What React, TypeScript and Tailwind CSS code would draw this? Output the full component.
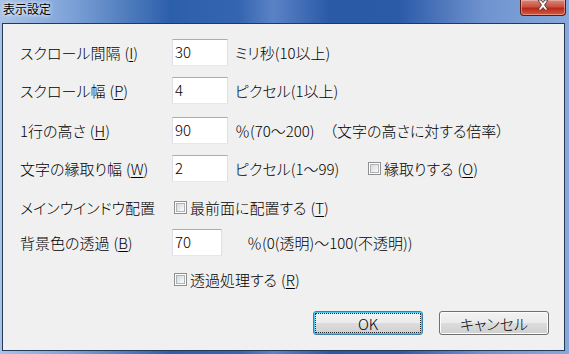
import React from 'react'

const font = "font-['Meiryo_UI','Noto_Sans_CJK_JP',sans-serif] [font-feature-settings:'palt'] font-light"

function TextBox({ value, wide = true }: { value: string; wide?: boolean }) {
  return (
    <div
      className={`${wide ? 'w-[56px]' : 'w-[50px]'} h-[27px] shrink-0 bg-white border border-t-[#abadb3] border-x-[#dbdfe6] border-b-[#e3e9ef] px-[2px] flex items-center text-[15px] leading-none text-black pb-[3px]`}
    >
      {value}
    </div>
  )
}

function CheckBox() {
  return (
    <div className="w-[13px] h-[13px] shrink-0 border border-[#8e8f8f] bg-white p-[1px]">
      <div className="w-full h-full border border-[#aeb3b9] bg-gradient-to-br from-[#d6d9dd] to-[#fbfbfb]" />
    </div>
  )
}

function Label({ children }: { children: React.ReactNode }) {
  return <div className="w-[152px] shrink-0 whitespace-nowrap">{children}</div>
}

function Key({ k }: { k: string }) {
  return (
    <span className="ml-[4px]">
      (<u className="underline-offset-2">{k}</u>)
    </span>
  )
}

export default function App() {
  return (
    <div className={`w-[569px] h-[354px] overflow-hidden flex flex-col bg-[linear-gradient(to_right,#a9c3e6_0%,#7fa3d8_12%,#2c5faa_30%,#3565b0_42%,#5a83c6_48%,#2a59a6_58%,#2b5aa7_70%,#6f93cf_85%,#86a8da_100%)] ${font}`}>
      {/* Title bar */}
      <div className="h-[23px] shrink-0 flex items-start justify-between pl-[3px]">
        <div className="mt-[2px] text-[12px] leading-[14px] font-normal text-black [text-shadow:0_0_6px_#ffffff,0_0_3px_#ffffff]">
          表示設定
        </div>
        <div className="mr-[3px] w-[46px] h-[16px] rounded-b-[4px] border border-t-0 border-[#5b1a14] bg-[linear-gradient(to_bottom,#d58a7d_0%,#c9503f_45%,#b8281a_55%,#d25d43_100%)] flex items-start justify-center shadow-[inset_0_0_0_1px_rgba(255,200,190,0.5)]">
          <svg width="12" height="10" viewBox="0 0 12 10">
            <path d="M1 0 L4 0 L6 2.5 L8 0 L11 0 L7.5 5 L11 10 L8 10 L6 7.5 L4 10 L1 10 L4.5 5 Z" fill="#ffffff" stroke="#3a2a2a" strokeWidth="0.8" />
          </svg>
        </div>
      </div>

      {/* Client area */}
      <div className="ml-[2px] mr-[4px] mb-[3px] flex-1 border border-[#263a57] bg-[#f0f0f0] text-[15px] leading-none text-black flex flex-col pl-[17px] pr-[15px]">
        <div className="mt-[15px] h-[27px] flex items-center">
          <Label>スクロール間隔<Key k="I" /></Label>
          <TextBox value="30" />
          <div className="ml-[7px] whitespace-nowrap">ミリ秒(10以上)</div>
        </div>

        <div className="mt-[11px] h-[27px] flex items-center">
          <Label>スクロール幅<Key k="P" /></Label>
          <TextBox value="4" />
          <div className="ml-[7px] whitespace-nowrap">ピクセル(1以上)</div>
        </div>

        <div className="mt-[13px] h-[27px] flex items-center">
          <Label>1行の高さ<Key k="H" /></Label>
          <TextBox value="90" />
          <div className="ml-[7px] whitespace-nowrap">％(70～200)　（文字の高さに対する倍率）</div>
        </div>

        <div className="mt-[11px] h-[27px] flex items-center">
          <Label>文字の縁取り幅<Key k="W" /></Label>
          <TextBox value="2" />
          <div className="ml-[7px] w-[133px] shrink-0 whitespace-nowrap">ピクセル(1～99)</div>
          <CheckBox />
          <div className="ml-[3px] whitespace-nowrap">縁取りする<Key k="O" /></div>
        </div>

        <div className="mt-[12px] h-[27px] flex items-center">
          <Label>メインウインドウ配置</Label>
          <div className="ml-[2px]"><CheckBox /></div>
          <div className="ml-[3px] whitespace-nowrap">最前面に配置する<Key k="T" /></div>
        </div>

        <div className="mt-[8px] h-[27px] flex items-center">
          <Label>背景色の透過<Key k="B" /></Label>
          <TextBox value="70" wide={false} />
          <div className="ml-[25px] whitespace-nowrap">％(0(透明)～100(不透明))</div>
        </div>

        <div className="mt-[10px] h-[27px] flex items-center">
          <Label>{''}</Label>
          <div className="ml-[2px]"><CheckBox /></div>
          <div className="ml-[3px] whitespace-nowrap">透過処理する<Key k="R" /></div>
        </div>

        <div className="mt-[18px] flex justify-end gap-[16px]">
          <button className="w-[110px] h-[24px] rounded-[3px] border border-[#3c7fb1] p-[1px] shadow-[inset_0_0_0_1px_#48c8f5] bg-[linear-gradient(to_bottom,#f2f2f2_0%,#ebebeb_50%,#dddddd_50%,#cfcfcf_100%)] font-light">
            <div className="w-full h-full border border-dotted border-[#222] flex items-center justify-center text-[15px]">OK</div>
          </button>
          <button className="w-[110px] h-[24px] rounded-[3px] border border-[#707070] shadow-[inset_0_0_0_1px_#fcfcfc] bg-[linear-gradient(to_bottom,#f2f2f2_0%,#ebebeb_50%,#dddddd_50%,#cfcfcf_100%)] font-light flex items-center justify-center text-[15px]">
            キャンセル
          </button>
        </div>
      </div>
    </div>
  )
}
